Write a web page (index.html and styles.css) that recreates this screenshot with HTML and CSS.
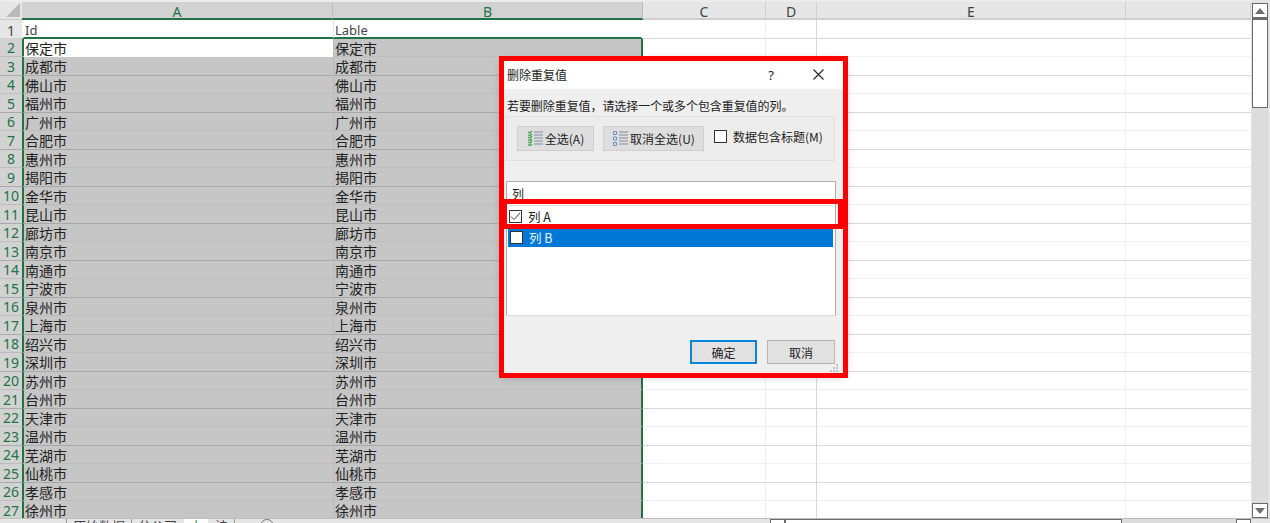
FILE: index.html
```html
<!DOCTYPE html>
<html lang="zh-CN">
<head>
<meta charset="utf-8">
<title>删除重复值</title>
<link rel="stylesheet" href="styles.css">
</head>
<body>
<div class="app">
  <div class="sheet">
    <div class="grid">
      <div class="row head">
        <div class="corner"><svg width="14" height="14" viewBox="0 0 14 14"><path d="M14 0V14H0Z" fill="#b9b9b9"/></svg></div>
        <div class="ch sel">A</div><div class="ch sel">B</div><div class="ch">C</div><div class="ch">D</div><div class="ch last-strong">E</div><div class="ch"></div>
      </div>
      <div class="row first"><div class="rh plain">1</div><div class="cell a latin">Id</div><div class="cell b latin">Lable</div><i class="c"></i><i class="d"></i><i class="e"></i><i class="f"></i></div>
      <div class="row on active"><div class="rh">2</div><div class="cell a">保定市</div><div class="cell b">保定市</div><i class="c"></i><i class="d"></i><i class="e"></i><i class="f"></i></div>
      <div class="row on"><div class="rh">3</div><div class="cell a">成都市</div><div class="cell b">成都市</div><i class="c"></i><i class="d"></i><i class="e"></i><i class="f"></i></div>
      <div class="row on"><div class="rh">4</div><div class="cell a">佛山市</div><div class="cell b">佛山市</div><i class="c"></i><i class="d"></i><i class="e"></i><i class="f"></i></div>
      <div class="row on"><div class="rh">5</div><div class="cell a">福州市</div><div class="cell b">福州市</div><i class="c"></i><i class="d"></i><i class="e"></i><i class="f"></i></div>
      <div class="row on"><div class="rh">6</div><div class="cell a">广州市</div><div class="cell b">广州市</div><i class="c"></i><i class="d"></i><i class="e"></i><i class="f"></i></div>
      <div class="row on"><div class="rh">7</div><div class="cell a">合肥市</div><div class="cell b">合肥市</div><i class="c"></i><i class="d"></i><i class="e"></i><i class="f"></i></div>
      <div class="row on"><div class="rh">8</div><div class="cell a">惠州市</div><div class="cell b">惠州市</div><i class="c"></i><i class="d"></i><i class="e"></i><i class="f"></i></div>
      <div class="row on"><div class="rh">9</div><div class="cell a">揭阳市</div><div class="cell b">揭阳市</div><i class="c"></i><i class="d"></i><i class="e"></i><i class="f"></i></div>
      <div class="row on"><div class="rh">10</div><div class="cell a">金华市</div><div class="cell b">金华市</div><i class="c"></i><i class="d"></i><i class="e"></i><i class="f"></i></div>
      <div class="row on"><div class="rh">11</div><div class="cell a">昆山市</div><div class="cell b">昆山市</div><i class="c"></i><i class="d"></i><i class="e"></i><i class="f"></i></div>
      <div class="row on"><div class="rh">12</div><div class="cell a">廊坊市</div><div class="cell b">廊坊市</div><i class="c"></i><i class="d"></i><i class="e"></i><i class="f"></i></div>
      <div class="row on"><div class="rh">13</div><div class="cell a">南京市</div><div class="cell b">南京市</div><i class="c"></i><i class="d"></i><i class="e"></i><i class="f"></i></div>
      <div class="row on"><div class="rh">14</div><div class="cell a">南通市</div><div class="cell b">南通市</div><i class="c"></i><i class="d"></i><i class="e"></i><i class="f"></i></div>
      <div class="row on"><div class="rh">15</div><div class="cell a">宁波市</div><div class="cell b">宁波市</div><i class="c"></i><i class="d"></i><i class="e"></i><i class="f"></i></div>
      <div class="row on"><div class="rh">16</div><div class="cell a">泉州市</div><div class="cell b">泉州市</div><i class="c"></i><i class="d"></i><i class="e"></i><i class="f"></i></div>
      <div class="row on"><div class="rh">17</div><div class="cell a">上海市</div><div class="cell b">上海市</div><i class="c"></i><i class="d"></i><i class="e"></i><i class="f"></i></div>
      <div class="row on"><div class="rh">18</div><div class="cell a">绍兴市</div><div class="cell b">绍兴市</div><i class="c"></i><i class="d"></i><i class="e"></i><i class="f"></i></div>
      <div class="row on"><div class="rh">19</div><div class="cell a">深圳市</div><div class="cell b">深圳市</div><i class="c"></i><i class="d"></i><i class="e"></i><i class="f"></i></div>
      <div class="row on"><div class="rh">20</div><div class="cell a">苏州市</div><div class="cell b">苏州市</div><i class="c"></i><i class="d"></i><i class="e"></i><i class="f"></i></div>
      <div class="row on"><div class="rh">21</div><div class="cell a">台州市</div><div class="cell b">台州市</div><i class="c"></i><i class="d"></i><i class="e"></i><i class="f"></i></div>
      <div class="row on"><div class="rh">22</div><div class="cell a">天津市</div><div class="cell b">天津市</div><i class="c"></i><i class="d"></i><i class="e"></i><i class="f"></i></div>
      <div class="row on"><div class="rh">23</div><div class="cell a">温州市</div><div class="cell b">温州市</div><i class="c"></i><i class="d"></i><i class="e"></i><i class="f"></i></div>
      <div class="row on"><div class="rh">24</div><div class="cell a">芜湖市</div><div class="cell b">芜湖市</div><i class="c"></i><i class="d"></i><i class="e"></i><i class="f"></i></div>
      <div class="row on"><div class="rh">25</div><div class="cell a">仙桃市</div><div class="cell b">仙桃市</div><i class="c"></i><i class="d"></i><i class="e"></i><i class="f"></i></div>
      <div class="row on"><div class="rh">26</div><div class="cell a">孝感市</div><div class="cell b">孝感市</div><i class="c"></i><i class="d"></i><i class="e"></i><i class="f"></i></div>
      <div class="row on"><div class="rh">27</div><div class="cell a">徐州市</div><div class="cell b">徐州市</div><i class="c"></i><i class="d"></i><i class="e"></i><i class="f"></i></div>
    </div>
    <div class="vscroll">
      <div class="sbtn"><svg width="10" height="6" viewBox="0 0 10 6"><path d="M5 0 10 6H0Z" fill="#6e6e6e"/></svg></div>
      <div class="vthumb"></div>
      <div class="vtrack"></div>
      <div class="sbtn"><svg width="10" height="6" viewBox="0 0 10 6"><path d="M0 0H10L5 6Z" fill="#6e6e6e"/></svg></div>
    </div>
  </div>
  <div class="tabbar">
    <div class="tab">原始数据</div>
    <div class="tab">分公司</div>
    <div class="tab current">上</div>
    <div class="tab">法</div>
    <div class="plus"></div>
    <div class="hscroll">
      <div class="hbtn"></div>
      <div class="hthumb"></div>
      <div class="htrack"></div>
      <div class="hbtn"></div>
    </div>
  </div>

  <div class="dialog">
    <div class="titlebar">
      <span class="dtitle">删除重复值</span>
      <span class="help">?</span>
      <svg class="close" width="11" height="11" viewBox="0 0 11 11"><path d="M.5.5l10 10M10.500.5l-10 10" stroke="#222" stroke-width="1.1" fill="none"/></svg>
    </div>
    <div class="dbody">
      <p class="prompt">若要删除重复值，请选择一个或多个包含重复值的列。</p>
      <div class="tools">
        <div class="btn tool sel-all">
          <svg width="16" height="17" viewBox="0 0 16 17"><path d="M1 2l2 1 2-2M1 7l2 1 2-2M1 12l2 1 2-2M1 4.500l2 1 2-1.500M1 9.500l2 1 2-1.500M1 14.500l2 1 2-1.500" stroke="#3fa34d" stroke-width="1.300" fill="none"/><path d="M7 2h9M7 5h9M7 8h9M7 11h9M7 14h9" stroke="#7f8fa3" stroke-width="1"/></svg>
          全选(A)
        </div>
        <div class="btn tool clear-all">
          <svg width="16" height="17" viewBox="0 0 16 17"><path d="M1.500 1.500h3v3h-3zM1.500 7h3v3h-3zM1.500 12.500h3v3h-3z" stroke="#6f8fc4" fill="none"/><path d="M7 2h9M7 5h9M7 8h9M7 11h9M7 14h9" stroke="#7f8fa3" stroke-width="1"/></svg>
          取消全选(U)
        </div>
        <div class="hascap"><span class="box"></span>数据包含标题(M)</div>
      </div>
      <div class="list">
        <div class="listhead">列</div>
        <div class="item">
          <span class="box"><svg width="11" height="9" viewBox="0 0 11 9"><path d="M1 4.500 4 7.500 10 1" stroke="#444" stroke-width="1" fill="none"/></svg></span>
          列 A
        </div>
        <div class="item picked"><span class="box"></span>列 B</div>
      </div>
      <div class="actions">
        <div class="btn act primary">确定</div>
        <div class="btn act">取消</div>
      </div>
      <svg class="grip" width="8" height="8" viewBox="0 0 8 8"><path d="M6 0h2v2H6zM3 3h2v2H3zM6 3h2v2H6zM0 6h2v2H0zM3 6h2v2H3zM6 6h2v2H6z" fill="#c2c2c2"/></svg>
    </div>
  </div>
  <div class="mark mark-outer"></div>
  <div class="mark mark-inner"></div>
</div>
</body>
</html>
```
FILE: styles.css
```css
* { box-sizing: border-box; }
html, body { margin: 0; padding: 0; }
body {
  width: 1270px;
  height: 523px;
  overflow: hidden;
  font-family: "Noto Sans CJK SC", "Noto Sans", sans-serif;
  background: #fff;
}
.app { position: relative; width: 1270px; height: 523px; display: flex; flex-direction: column; overflow: hidden; }
.sheet { display: flex; height: 518px; overflow: hidden; }
.grid { width: 1251px; padding-top: 2px; background: #ececec; overflow: hidden; }

.row {
  display: grid;
  grid-template-columns: 22px 311px 310px 123px 51px 309px 125px;
  grid-template-rows: minmax(0, 1fr);
  height: 18px;
  line-height: 18px;
  background: #fff;
}
.row:nth-child(even) { height: 19px; line-height: 19px; }
.row.first { line-height: 21px; }
.row.head { height: 18px; background: #e6e6e6; }
.corner { display: flex; align-items: flex-end; justify-content: flex-end; padding: 0 2px 2px 0; border-bottom: 1px solid #c8c8c8; overflow: hidden; }
.ch {
  font: 14px/20px "Noto Sans", sans-serif;
  color: #444;
  text-align: center;
  border-right: 1px solid #d0d0d0;
  border-bottom: 2px solid #cdcdcd;
  overflow: hidden;
}
.ch.sel { background: #d2d2d2; color: #217346; border-bottom-color: #217346; border-right-color: #bcbcbc; }

.rh {
  font-family: "Noto Sans", sans-serif;
  font-size: 14px;
  color: #217346;
  background: #d2d2d2;
  text-align: center;
  border-bottom: 1px solid #bdbdbd;
  overflow: hidden;
}
.rh.plain { color: #444; background: #e6e6e6; border-bottom-color: #d0d0d0; }
.row:nth-child(even) .rh { border-bottom-color: #a9a9a9; }
.row.first .rh { border-bottom-color: #cfcfcf; }

.cell {
  font-size: 14px;
  color: #222;
  white-space: nowrap;
  overflow: hidden;
  border-bottom: 1px solid transparent;
}
.latin { font-family: "Noto Sans", sans-serif; font-size: 13px; color: #444; }
.a { padding-left: 1px; border-left: 2px solid #217346; }
.b { padding-left: 1px; border-right: 2px solid #217346; border-left: 1px solid #e4e4e4; }
.row > i { display: block; border-bottom: 1px solid #f0f0f0; }
.row:nth-child(even) > i { border-bottom-color: #d8d8d8; }
.c { border-right: 1px solid #efefef; }
.d { border-right: 1px solid #d8d8d8; }
.e { border-right: 1px solid #f0f0f0; }

.first .a, .first .b { border-bottom: 2px solid #217346; background: #fff; }
.first .a { border-left-color: transparent; }
.first .b { border-right-color: transparent; }
.on .a, .on .b { background: #c6c6c6; border-bottom-color: #bdbdbd; }
.on .b { border-left-color: #bbb; }
.on:nth-child(even) .a, .on:nth-child(even) .b { border-bottom-color: #a9a9a9; }
.active .a { background: #fff; border-bottom-color: #fff; }

.vscroll { width: 19px; display: flex; flex-direction: column; padding: 3px 2px 0 1px; background: #e3e3e3; }
.sbtn { height: 15px; flex: none; background: #fff; border: 1px solid #6a6a6a; display: flex; align-items: center; justify-content: center; }
.vthumb { height: 90px; flex: none; background: #fff; border: 1px solid #6a6a6a; border-top-width: 2px; }
.vtrack { height: 395px; flex: none; background: #dcdcdc; }

.tabbar { display: flex; align-items: flex-start; height: 5px; background: #e6e6e6; border-top: 1px solid #bdbdbd; padding-left: 66px; font-size: 13px; overflow: hidden; }
.tab { padding: 0 6px; line-height: 14px; height: 16px; color: #444; border-left: 1px solid #999; }
.tab.current { background: #fff; color: #217346; padding: 0 6px; margin-left: 1px; border-left: 0; width: 24px; }
.tab.current + .tab { border-left: 0; padding: 0 6px 0 7px; border-right: 1px solid #999; }
.plus { width: 14px; height: 14px; margin-left: 25px; margin-top: 0; border: 1px solid #777; border-radius: 50%; }
.hscroll { display: flex; margin-left: auto; margin-right: 19px; width: 481px; height: 5px; background: #dcdcdc; }
.hbtn { width: 15px; background: #fff; border: 1px solid #6a6a6a; }
.hthumb { width: 337px; background: #fff; border: 1px solid #6a6a6a; }
.htrack { flex: 1; }

.dialog {
  position: absolute;
  left: 503px;
  top: 60px;
  width: 341px;
  height: 313px;
  display: flex;
  flex-direction: column;
  background: #efefef;
  box-shadow: 0 2px 10px rgba(0,0,0,.3);
  font-size: 12px;
  color: #222;
}
.titlebar { height: 29px; flex: none; display: flex; align-items: center; background: #fff; padding-left: 4px; }
.dtitle { flex: 1; }
.help { font: 13px "Noto Sans", sans-serif; margin-right: 39px; }
.close { margin-right: 20px; }
.dbody { position: relative; flex: 1; padding: 9px 9px 0 3px; display: flex; flex-direction: column; }
.prompt { margin: 0 0 0 1px; height: 18px; line-height: 16px; white-space: nowrap; letter-spacing: -.07px; }
.tools {
  height: 45px;
  flex: none;
  display: flex;
  align-items: flex-start;
  gap: 9px;
  padding: 9px 0 0 10px;
  background: #ececec;
  border: 1px solid #e0e0e0;
}
.btn {
  display: flex;
  align-items: center;
  justify-content: center;
  background: #dedede;
  border: 1px solid #cfcfcf;
}
.tool { height: 25px; gap: 2px; }
.sel-all { width: 77px; }
.clear-all { width: 101px; }
.hascap { display: flex; align-items: center; gap: 6px; margin-top: 3px; margin-left: 1px; white-space: nowrap; height: 14px; }
.box {
  width: 13px;
  height: 13px;
  flex: none;
  background: #fff;
  border: 1px solid #333;
  display: flex;
  align-items: center;
  justify-content: center;
}
.list {
  margin-top: 20px;
  height: 135px;
  flex: none;
  margin-right: -1px;
  background: #fff;
  border: 1px solid #b0b0b0;
  border-bottom-color: #dcdcdc;
  padding: 0 2px 0 1px;
}
.listhead { height: 24px; line-height: 24px; padding-left: 4px; border-bottom: 1px solid #ddd; }
.item { display: flex; align-items: center; height: 19px; gap: 6px; padding-left: 1px; white-space: nowrap; font-size: 12.500px; }
.item:nth-child(2) { height: 22px; padding-bottom: 2px; }
.picked { background: #0078d7; color: #e8f2fb; padding-left: 2px; padding-bottom: 1px; }
.actions { display: flex; justify-content: flex-end; gap: 10px; margin-top: 24px; }
.act { width: 68px; height: 24px; background: #e1e1e1; border-color: #b5b5b5; }
.primary { border: 2px solid #0a84d8; width: 67px; }
.grip { position: absolute; right: 6px; bottom: 1px; }

.mark { position: absolute; border: 5px solid #ff0000; pointer-events: none; }
.mark-outer { left: 499px; top: 56px; width: 349px; height: 322px; }
.mark-inner { left: 502px; top: 199px; width: 341px; height: 30px; }
```
